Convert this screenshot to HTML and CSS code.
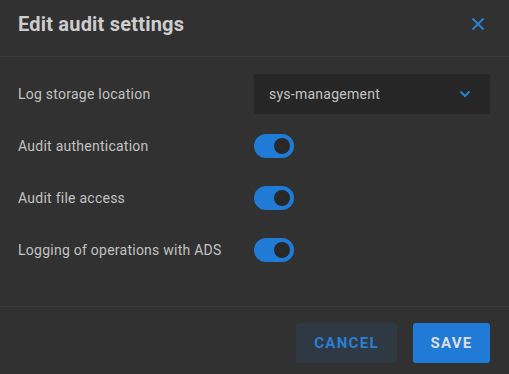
FILE: index.html
```html
<!DOCTYPE html>
<html lang="en">
<head>
	<meta charset="UTF-8">
	<title>Edit audit settings</title>
	<link rel="stylesheet" href="styles.css">
</head>
<body>
	<div class="dialog">
		<div class="dlg-head">
			<span class="dlg-title">Edit audit settings</span>
			<button class="dlg-close" aria-label="Close">
				<svg width="14" height="14" viewBox="0 0 14 14"><path d="M1.5 1.5 L12.5 12.5 M12.5 1.5 L1.5 12.5" stroke="#2a7fd4" stroke-width="2" fill="none"/></svg>
			</button>
		</div>

		<div class="dlg-body">
			<div class="row">
				<span class="label">Log storage location</span>
				<div class="select">
					<span>sys-management</span>
					<svg width="12" height="8" viewBox="0 0 12 8"><path d="M1.5 1.5 L6 6 L10.5 1.5" stroke="#2a7fd4" stroke-width="2" fill="none"/></svg>
				</div>
			</div>
			<div class="row">
				<span class="label">Audit authentication</span>
				<div class="toggle"><div class="knob"></div></div>
			</div>
			<div class="row">
				<span class="label">Audit file access</span>
				<div class="toggle"><div class="knob"></div></div>
			</div>
			<div class="row">
				<span class="label">Logging of operations with ADS</span>
				<div class="toggle"><div class="knob"></div></div>
			</div>
		</div>

		<div class="dlg-foot">
			<button class="btn btn-cancel">CANCEL</button>
			<button class="btn btn-save">SAVE</button>
		</div>
	</div>
</body>
</html>
```

FILE: styles.css
```css
html,body{ margin: 0;padding: 0; }
body{ background: #313131; font-family: Roboto, "Liberation Sans", sans-serif; }

.dialog{ width: 509px;height: 374px; background: #313131; color: #c4c4c4; }

.dlg-head{ height: 57px; box-sizing: border-box; padding: 0 18px 8px 18px; border-bottom: 1px solid #3b3b3b;
		display: flex;justify-content: space-between;align-items: center; }
.dlg-title{ font-size: 20px;font-weight: 700; letter-spacing: 0.2px; color: #cdcdcd; }
.dlg-close{ background: none;border: 0;padding: 0; width: 14px;height: 14px; margin-right: 6px; display: flex; }

.dlg-body{ padding: 17px 19px 30px 18px; }
.row{ height: 52px; display: flex;align-items: center; }
.row:first-child{ height: 40px; margin-bottom: 6px; }
.label{ width: 236px; font-size: 14px; letter-spacing: 0.25px; color: #c2c2c2; }

.select{ width: 236px;height: 40px; box-sizing: border-box; padding: 0 19px 0 15px; background: #262626;
		border-radius: 3px; font-size: 14px; letter-spacing: 0.25px; color: #c4c4c4;
		display: flex;justify-content: space-between;align-items: center; }

.toggle{ width: 40px;height: 24px; border-radius: 12px; background: #1f7bd6; position: relative; }
.toggle .knob{ position: absolute; right: 4px;top: 4px; width: 16px;height: 16px; border-radius: 50%; background: #282828; }

.dlg-foot{ border-top: 1px solid #3b3b3b; padding: 16px 19px 0 0;
		display: flex;justify-content: flex-end; gap: 16px; }
.btn{ height: 40px; border: 0;border-radius: 3px; font-family: Roboto, "Liberation Sans", sans-serif;
		font-size: 15px;font-weight: 700; letter-spacing: 1.3px; }
.btn-cancel{ width: 101px; background: #2e3944; color: #2a7fd4; }
.btn-save{ width: 77px; background: #1f7bd6; color: #dedede; }
```
